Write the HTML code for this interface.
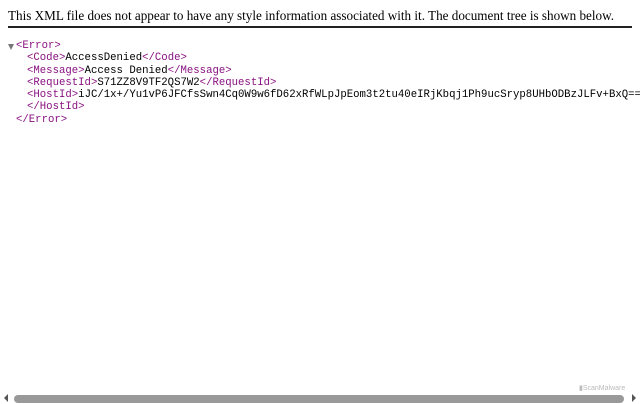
<!DOCTYPE html>
<html><head><style>
body{margin:0;width:640px;height:404px;overflow:hidden;background:#fff;position:relative}
.hdr{position:absolute;left:8px;top:8px;font:13.15px "Liberation Serif",serif;color:#000;white-space:nowrap}
.rule{position:absolute;left:8px;right:8px;top:26px;height:2px;background:#222}
.x{position:absolute;left:0;top:40px;font:10.67px/12.3px "Liberation Mono",monospace;white-space:pre;color:#000}
.x div{height:12.3px}
.o{padding-left:16px}.i{padding-left:27px}
.t{color:#881280}
.tri{position:absolute;left:8px;top:44px;width:0;height:0;border-left:3px solid transparent;border-right:3px solid transparent;border-top:6px solid #777}
.sb{position:absolute;left:14px;width:610px;top:395px;height:8px;border-radius:4px;background:#999}
.la{position:absolute;left:4px;top:394px;border-top:4px solid transparent;border-bottom:4px solid transparent;border-right:4px solid #555}
.ra{position:absolute;left:632px;top:394px;border-top:4px solid transparent;border-bottom:4px solid transparent;border-left:4px solid #555}
.sm{position:absolute;left:579px;top:384px;font:7px "Liberation Sans",sans-serif;color:#bbb}
</style></head><body>
<div class="hdr">This XML file does not appear to have any style information associated with it. The document tree is shown below.</div>
<div class="rule"></div>
<div class="tri"></div>
<div class="x"><div class="o"><span class="t">&lt;Error&gt;</span></div><div class="i"><span class="t">&lt;Code&gt;</span>AccessDenied<span class="t">&lt;/Code&gt;</span></div><div class="i"><span class="t">&lt;Message&gt;</span>Access Denied<span class="t">&lt;/Message&gt;</span></div><div class="i"><span class="t">&lt;RequestId&gt;</span>S71ZZ8V9TF2QS7W2<span class="t">&lt;/RequestId&gt;</span></div><div class="i"><span class="t">&lt;HostId&gt;</span>iJC/1x+/Yu1vP6JFCfsSwn4Cq0W9w6fD62xRfWLpJpEom3t2tu40eIRjKbqj1Ph9ucSryp8UHbODBzJLFv+BxQ==</div><div class="i"><span class="t">&lt;/HostId&gt;</span></div><div class="o"><span class="t">&lt;/Error&gt;</span></div></div>
<div class="sm">▮ScanMalware</div>
<div class="la"></div><div class="sb"></div><div class="ra"></div>
</body></html>
